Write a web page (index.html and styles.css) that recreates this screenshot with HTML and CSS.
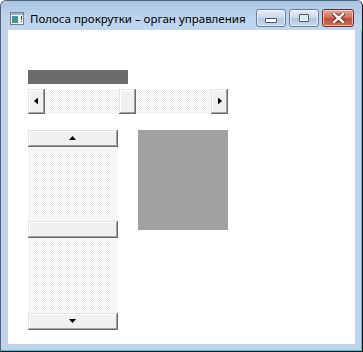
FILE: index.html
```html
<!DOCTYPE html>
<html lang="ru">
<head>
  <meta charset="UTF-8">
  <title>Полоса прокрутки – орган управления</title>
  <link rel="stylesheet" href="styles.css">
</head>
<body>

  <div class="window">
    <!-- заголовок окна -->
    <div class="titlebar">
      <svg class="app-icon" width="14" height="13" viewBox="0 0 14 13">
        <defs>
          <linearGradient id="ig" x1="0" y1="0" x2="1" y2="1">
            <stop offset="0" stop-color="#3f8fb0"/>
            <stop offset="1" stop-color="#3aa06a"/>
          </linearGradient>
        </defs>
        <rect x="0.5" y="0.5" width="13" height="12" fill="#f4f6f8" stroke="#6f7f8f"/>
        <rect x="1" y="1" width="12" height="2" fill="#9fb4c8"/>
        <rect x="2" y="4" width="6" height="7" fill="url(#ig)"/>
        <rect x="11" y="4" width="1" height="4" fill="#2a3a4a"/>
        <rect x="11" y="9" width="1" height="1" fill="#2a3a4a"/>
      </svg>
      <span class="title-text">Полоса прокрутки – орган управления</span>
      <div class="caption-btns">
        <div class="cap-btn">
          <span class="glyph-min"></span>
        </div>
        <div class="cap-btn">
          <span class="glyph-max"></span>
        </div>
        <div class="cap-btn close">
          <svg width="13" height="10" viewBox="0 0 13 10">
            <path d="M2 1 L11 9 M11 1 L2 9" stroke="#6b2a22" stroke-width="4.4" stroke-linecap="square"/>
            <path d="M2 1 L11 9 M11 1 L2 9" stroke="#ffffff" stroke-width="2.4" stroke-linecap="square"/>
          </svg>
        </div>
      </div>
    </div>

    <!-- клиентская область -->
    <div class="client">
      <div class="bar"></div>

      <div class="hscroll">
        <div class="sb-btn"><span class="arrow arrow-left"></span></div>
        <div class="track track-first-h"></div>
        <div class="sb-btn thumb"></div>
        <div class="track track-rest"></div>
        <div class="sb-btn"><span class="arrow arrow-right"></span></div>
      </div>

      <div class="lower">
        <div class="vscroll">
          <div class="sb-btn"><span class="arrow arrow-up"></span></div>
          <div class="track track-first-v"></div>
          <div class="sb-btn thumb"></div>
          <div class="track track-rest"></div>
          <div class="sb-btn"><span class="arrow arrow-down"></span></div>
        </div>
        <div class="gray-box"></div>
      </div>
    </div>
  </div>

</body>
</html>
```

FILE: styles.css
```css
body {
  margin: 0;
  padding: 0;
  font-family: "Noto Sans", "Liberation Sans", sans-serif;
}

.window {
  width: 363px;
  height: 352px;
  box-sizing: border-box;
  background: #bfd4eb;
  border: 1px solid #4f6379;
  border-right-color: #111;
  border-bottom-color: #111;
  border-radius: 6px 6px 0 0;
  box-shadow: inset -1px -1px 0 #46c8da;
  display: flex;
  flex-direction: column;
}

/* === заголовок === */
.titlebar {
  height: 29px;
  flex: none;
  display: flex;
  align-items: flex-start;
  padding: 0 8px 0 9px;
  background: linear-gradient(#a9c3e1, #bcd3ec 55%, #c2d7ee);
  border-radius: 5px 5px 0 0;
}

.app-icon {
  margin-top: 11px;
  flex: none;
}

.title-text {
  margin-left: 6px;
  margin-top: 10px;
  font-size: 11.5px;
  line-height: 16px;
  color: #000;
  white-space: nowrap;
}

.caption-btns {
  margin-left: auto;
  margin-top: 8px;
  display: flex;
  gap: 3px;
}

.cap-btn {
  width: 30px;
  height: 18px;
  box-sizing: border-box;
  border: 1px solid #6a7f99;
  border-radius: 3px;
  background: linear-gradient(#e4edf7, #c9d9ec 50%, #b3c8e1 51%, #c4d6ec);
  box-shadow: inset 0 0 0 1px rgba(255,255,255,0.55);
  display: flex;
  align-items: center;
  justify-content: center;
}

.cap-btn.close {
  width: 32px;
  border-color: #6e2a24;
  background: linear-gradient(#e8a496, #d46d5d 50%, #c14b39 51%, #d36a55);
}

.glyph-min {
  width: 10px;
  height: 3px;
  margin-top: 5px;
  background: #fff;
  border: 1px solid #42546c;
  border-radius: 1px;
}

.glyph-max {
  width: 8px;
  height: 6px;
  border: 1px solid #42546c;
  outline: 1px solid #fff;
  outline-offset: -2px;
  background: #dbe6f3;
  border-radius: 1px;
}

/* === клиентская область === */
.client {
  flex: 1;
  margin: 0 7px 7px 7px;
  background: #fff;
  padding: 40px 20px 0 20px;
}

.bar {
  width: 100px;
  height: 14px;
  background: #6b6b6b;
  margin-bottom: 5px;
}

.hscroll {
  width: 200px;
  height: 25px;
  display: flex;
  margin-bottom: 16px;
}

.hscroll .sb-btn {
  width: 17px;
}

.lower {
  display: flex;
  align-items: flex-start;
  gap: 20px;
}

.vscroll {
  width: 90px;
  height: 200px;
  display: flex;
  flex-direction: column;
}

.vscroll .sb-btn {
  height: 17px;
}

.sb-btn {
  flex: none;
  box-sizing: border-box;
  background: #f0f0f0;
  box-shadow:
    inset -1px -1px 0 #696969,
    inset 1px 1px 0 #e3e3e3,
    inset -2px -2px 0 #a0a0a0,
    inset 2px 2px 0 #fff;
  display: flex;
  align-items: center;
  justify-content: center;
}

.track {
  background: repeating-conic-gradient(#ececec 0 25%, #ffffff 0 50%) 0 0 / 2px 2px;
}

.track-first-h {
  width: 74px;
  flex: none;
}

.track-first-v {
  height: 74px;
  flex: none;
}

.track-rest {
  flex: 1;
}

.arrow {
  display: block;
  background: #000;
}

.arrow-up {
  width: 7px;
  height: 4px;
  clip-path: polygon(50% 0, 100% 100%, 0 100%);
  margin: -1px 1px 0 0;
}

.arrow-down {
  width: 7px;
  height: 4px;
  clip-path: polygon(0 0, 100% 0, 50% 100%);
  margin: 0 1px 1px 0;
}

.arrow-left {
  width: 4px;
  height: 7px;
  clip-path: polygon(0 50%, 100% 0, 100% 100%);
  margin: 0 1px 1px 0;
}

.arrow-right {
  width: 4px;
  height: 7px;
  clip-path: polygon(0 0, 100% 50%, 0 100%);
  margin: 0 0 1px 1px;
}

.gray-box {
  width: 90px;
  height: 100px;
  background: #a0a0a0;
}
```
